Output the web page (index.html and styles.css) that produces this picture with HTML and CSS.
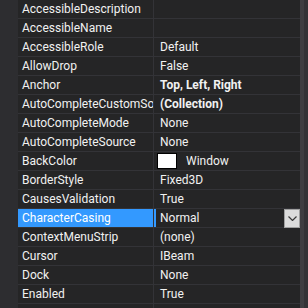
FILE: index.html
```html
<!DOCTYPE html>
<html lang="en">
<head>
  <meta charset="UTF-8" />
  <title>Properties</title>
  <link rel="stylesheet" href="styles.css">
</head>
<body>
  <div class="grid">
    <div class="rows">
      <div class="row"><div class="name">AccessibleDescription</div><div class="value"></div></div>
      <div class="row"><div class="name">AccessibleName</div><div class="value"></div></div>
      <div class="row"><div class="name">AccessibleRole</div><div class="value">Default</div></div>
      <div class="row"><div class="name">AllowDrop</div><div class="value">False</div></div>
      <div class="row"><div class="name">Anchor</div><div class="value bold">Top, Left, Right</div></div>
      <div class="row"><div class="name">AutoCompleteCustomSource</div><div class="value bold">(Collection)</div></div>
      <div class="row"><div class="name">AutoCompleteMode</div><div class="value">None</div></div>
      <div class="row"><div class="name">AutoCompleteSource</div><div class="value">None</div></div>
      <div class="row"><div class="name">BackColor</div><div class="value"><span class="swatch"></span>Window</div></div>
      <div class="row"><div class="name">BorderStyle</div><div class="value">Fixed3D</div></div>
      <div class="row"><div class="name">CausesValidation</div><div class="value">True</div></div>
      <div class="row selected">
        <div class="name">CharacterCasing</div>
        <div class="value">Normal
          <span class="drop">
            <svg width="9" height="5" viewBox="0 0 9 5"><path d="M0.5 0.5 L4.5 4.5 L8.5 0.5" fill="none" stroke="#3a3a3a" stroke-width="1.2"/></svg>
          </span>
        </div>
      </div>
      <div class="row"><div class="name">ContextMenuStrip</div><div class="value">(none)</div></div>
      <div class="row"><div class="name">Cursor</div><div class="value">IBeam</div></div>
      <div class="row"><div class="name">Dock</div><div class="value">None</div></div>
      <div class="row"><div class="name">Enabled</div><div class="value">True</div></div>
      <div class="row"><div class="name"></div><div class="value"></div></div>
    </div>
    <div class="scroll"></div>
  </div>
</body>
</html>
```

FILE: styles.css
```css
html, body {
  margin: 0;
  padding: 0;
  background: #252526;
  overflow: hidden;
}

.grid {
  display: flex;
  width: 308px;
  height: 308px;
  font-family: Roboto, 'Noto Sans', sans-serif;
  font-size: 12px;
  color: #f1f1f1;
}

.rows {
  width: 300px;
  padding-left: 18px;
  background: #252526;
  box-shadow: inset 18px 0 0 #2d2d30;
}

.row {
  display: flex;
  height: 18px;
  border-bottom: 1px solid #333337;
  line-height: 18px;
}

.name {
  width: 131px;
  padding-left: 4px;
  border-right: 1px solid #333337;
  white-space: nowrap;
  overflow: hidden;
}

.value {
  flex: 1;
  display: flex;
  align-items: center;
  padding-left: 6px;
  white-space: nowrap;
}

.bold {
  font-weight: bold;
}

.swatch {
  width: 18px;
  height: 14px;
  margin-left: -3px;
  margin-right: 9px;
  background: #ffffff;
  border: 1px solid #000000;
}

.selected .name {
  background: #3399ff;
  color: #ffffff;
}

.selected .value {
  box-shadow: inset 2px 0 0 #3399ff;
  position: relative;
}

.drop {
  position: absolute;
  right: 0;
  top: 0;
  width: 14px;
  height: 17px;
  display: flex;
  align-items: center;
  justify-content: center;
  background: #dcdcdc;
  border: 1px solid #a0a0a0;
}

.scroll {
  width: 8px;
  background: #3e3e42;
  box-shadow: inset -4px 0 0 #333337;
}
```
